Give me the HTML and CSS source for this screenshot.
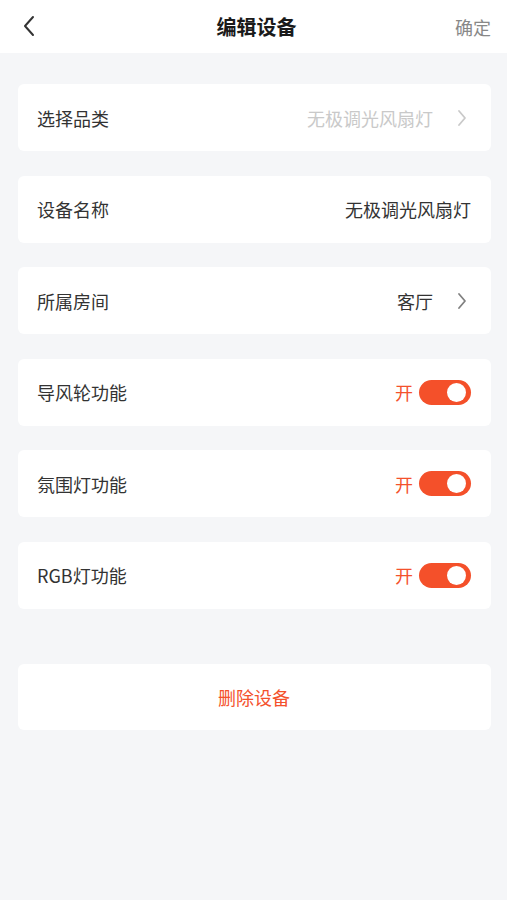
FILE: index.html
```html
<!DOCTYPE html>
<html lang="zh-CN">
<head>
  <meta charset="UTF-8">
  <title>编辑设备</title>
  <link rel="stylesheet" href="styles.css">
</head>
<body>

  <div class="header">
    <div class="back">
      <svg width="14" height="22" viewBox="0 0 14 22"><path d="M11 2 L3 11 L11 20" fill="none" stroke="#333" stroke-width="2" stroke-linecap="round" stroke-linejoin="round"/></svg>
    </div>
    <div class="title">编辑设备</div>
    <div class="confirm">确定</div>
  </div>

  <div class="list">
    <div class="card">
      <span class="label">选择品类</span>
      <span class="value muted">无极调光风扇灯</span>
      <svg class="arrow" width="14" height="18" viewBox="0 0 14 18"><path d="M4 2 L10 9 L4 16" fill="none" stroke="#c9c9c9" stroke-width="1.8" stroke-linecap="round" stroke-linejoin="round"/></svg>
    </div>

    <div class="card">
      <span class="label">设备名称</span>
      <span class="value">无极调光风扇灯</span>
    </div>

    <div class="card">
      <span class="label">所属房间</span>
      <span class="value">客厅</span>
      <svg class="arrow" width="14" height="18" viewBox="0 0 14 18"><path d="M4 2 L10 9 L4 16" fill="none" stroke="#808080" stroke-width="1.8" stroke-linecap="round" stroke-linejoin="round"/></svg>
    </div>

    <div class="card">
      <span class="label">导风轮功能</span>
      <span class="state">开</span>
      <span class="switch on"></span>
    </div>

    <div class="card">
      <span class="label">氛围灯功能</span>
      <span class="state">开</span>
      <span class="switch on"></span>
    </div>

    <div class="card">
      <span class="label">RGB灯功能</span>
      <span class="state">开</span>
      <span class="switch on"></span>
    </div>

    <div class="card delete">删除设备</div>
  </div>

</body>
</html>
```

FILE: styles.css
```css
body {
  margin: 0;
  background-color: #f5f6f8;
  font-family: "Noto Sans CJK SC", "Noto Sans", sans-serif;
  color: #333;
}

.header {
  height: 53px;
  background-color: #fff;
  display: flex;
  align-items: center;
  padding: 0 16px 0 22px;
}

.back {
  width: 60px;
  display: flex;
  align-items: center;
  margin-top: -2px;
}

.title {
  flex: 1;
  text-align: center;
  font-size: 20px;
  font-weight: bold;
  color: #1a1a1a;
  margin-right: 24px;
}

.confirm {
  width: 36px;
  text-align: right;
  font-size: 18px;
  color: #888;
}

.list {
  padding: 31px 16px 0 18px;
  display: flex;
  flex-direction: column;
  gap: 24.6px;
}

.card {
  height: 67px;
  background-color: #fff;
  border-radius: 6px;
  display: flex;
  align-items: center;
  padding: 0 20px 0 19px;
  font-size: 18px;
}

.label {
  flex: 1;
  color: #333;
}

.value {
  color: #333;
}

.value.muted {
  color: #c9c9c9;
}

.arrow {
  margin-left: 22px;
  margin-right: 2px;
}

.state {
  color: #f4512c;
  margin-right: 6px;
}

.switch {
  position: relative;
  width: 52px;
  height: 25px;
  border-radius: 13px;
  background-color: #f4502a;
}

.switch::after {
  content: "";
  position: absolute;
  top: 3px;
  right: 5px;
  width: 19px;
  height: 19px;
  border-radius: 50%;
  background-color: #fff;
}

.delete {
  margin-top: 30px;
  height: 66px;
  justify-content: center;
  color: #f4512c;
}
```
